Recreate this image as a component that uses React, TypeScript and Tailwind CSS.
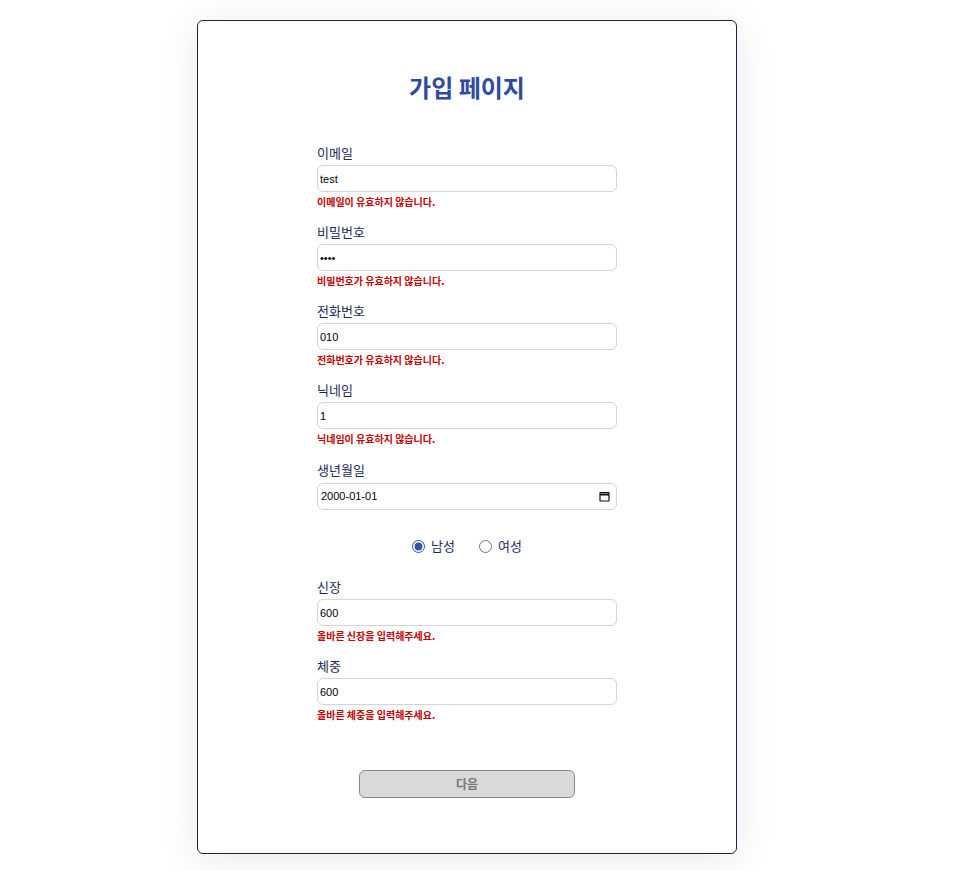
import React, { useState } from 'react';

const font = "font-['Malgun_Gothic','Noto_Sans_CJK_KR',sans-serif]";

interface Field {
  id: string;
  label: string;
  type: string;
  value: string;
  error?: string;
}

const topFields: Field[] = [
  { id: 'email', label: '이메일', type: 'text', value: 'test', error: '이메일이 유효하지 않습니다.' },
  { id: 'password', label: '비밀번호', type: 'password', value: '1234', error: '비밀번호가 유효하지 않습니다.' },
  { id: 'phone', label: '전화번호', type: 'text', value: '010', error: '전화번호가 유효하지 않습니다.' },
  { id: 'nickname', label: '닉네임', type: 'text', value: '1', error: '닉네임이 유효하지 않습니다.' },
];

const bodyFields: Field[] = [
  { id: 'height', label: '신장', type: 'text', value: '600', error: '올바른 신장을 입력해주세요.' },
  { id: 'weight', label: '체중', type: 'text', value: '600', error: '올바른 체중을 입력해주세요.' },
];

const inputClass =
  "block w-full h-[27px] px-[2px] border border-[#d4d4d4] rounded-[6px] bg-white text-[11px] text-black font-['Liberation_Sans',Arial,sans-serif] outline-none";

const FormField: React.FC<{ field: Field }> = ({ field }) => (
  <div className="mb-[14px]">
    <label htmlFor={field.id} className={`block text-[13px] leading-[18px] text-[#1c2a55] ${font}`}>
      {field.label}
    </label>
    <input id={field.id} type={field.type} defaultValue={field.value} className={`mt-[3px] ${inputClass}`} />
    {field.error && (
      <p className={`mt-[3px] text-[10px] leading-[14px] font-bold text-[#c40000] ${font}`}>{field.error}</p>
    )}
  </div>
);

export default function App() {
  const [gender, setGender] = useState('male');

  return (
    <div className="min-h-screen bg-white pt-[20px] pb-[20px]">
      <div className="ml-[197px] w-[540px] h-[834px] bg-white border border-[#1a2444] rounded-[6px] shadow-[0_6px_40px_rgba(0,0,0,0.09)] pt-[50px]">
        <h1 className={`text-center text-[24px] leading-[32px] font-bold text-[#2f4a9f] ${font}`}>가입 페이지</h1>

        <form className="w-[300px] mx-auto mt-[41px]" onSubmit={(e) => e.preventDefault()}>
          {topFields.map((f) => (
            <FormField key={f.id} field={f} />
          ))}

          {/* Birth date */}
          <div className="pt-[1px]">
            <label htmlFor="birth" className={`block text-[13px] leading-[18px] text-[#1c2a55] ${font}`}>
              생년월일
            </label>
            <div className="mt-[4px] flex items-center h-[27px] border border-[#d4d4d4] rounded-[6px] pl-[3px] pr-[6px]">
              <input
                id="birth"
                type="text"
                defaultValue="2000-01-01"
                className="flex-1 text-[11px] text-black font-['Liberation_Sans',Arial,sans-serif] outline-none"
              />
              <svg width="11" height="11" viewBox="0 0 11 11" fill="none" stroke="#111" strokeWidth="1.2">
                <rect x="1" y="1.5" width="9" height="8.5" rx="0.5" />
                <line x1="1" y1="3.5" x2="10" y2="3.5" strokeWidth="2" />
              </svg>
            </div>
          </div>

          {/* Gender */}
          <div className={`mt-[26px] h-[20px] flex items-center justify-center gap-[24px] text-[13px] text-[#1c2a55] ${font}`}>
            <label className="flex items-center gap-[6px]">
              <input
                type="radio"
                name="gender"
                checked={gender === 'male'}
                onChange={() => setGender('male')}
                className="w-[13px] h-[13px] m-0 accent-[#3553a8]"
              />
              남성
            </label>
            <label className="flex items-center gap-[6px]">
              <input
                type="radio"
                name="gender"
                checked={gender === 'female'}
                onChange={() => setGender('female')}
                className="w-[13px] h-[13px] m-0 accent-[#3553a8]"
              />
              여성
            </label>
          </div>

          <div className="mt-[22px]">
            {bodyFields.map((f) => (
              <FormField key={f.id} field={f} />
            ))}
          </div>

          <div className="flex justify-center mt-[48px]">
            <button
              type="submit"
              disabled
              className={`w-[216px] h-[28px] bg-[#d9d9d9] border border-[#888] rounded-[6px] text-[12px] font-bold text-[#777] ${font}`}
            >
              다음
            </button>
          </div>
        </form>
      </div>
    </div>
  );
}
